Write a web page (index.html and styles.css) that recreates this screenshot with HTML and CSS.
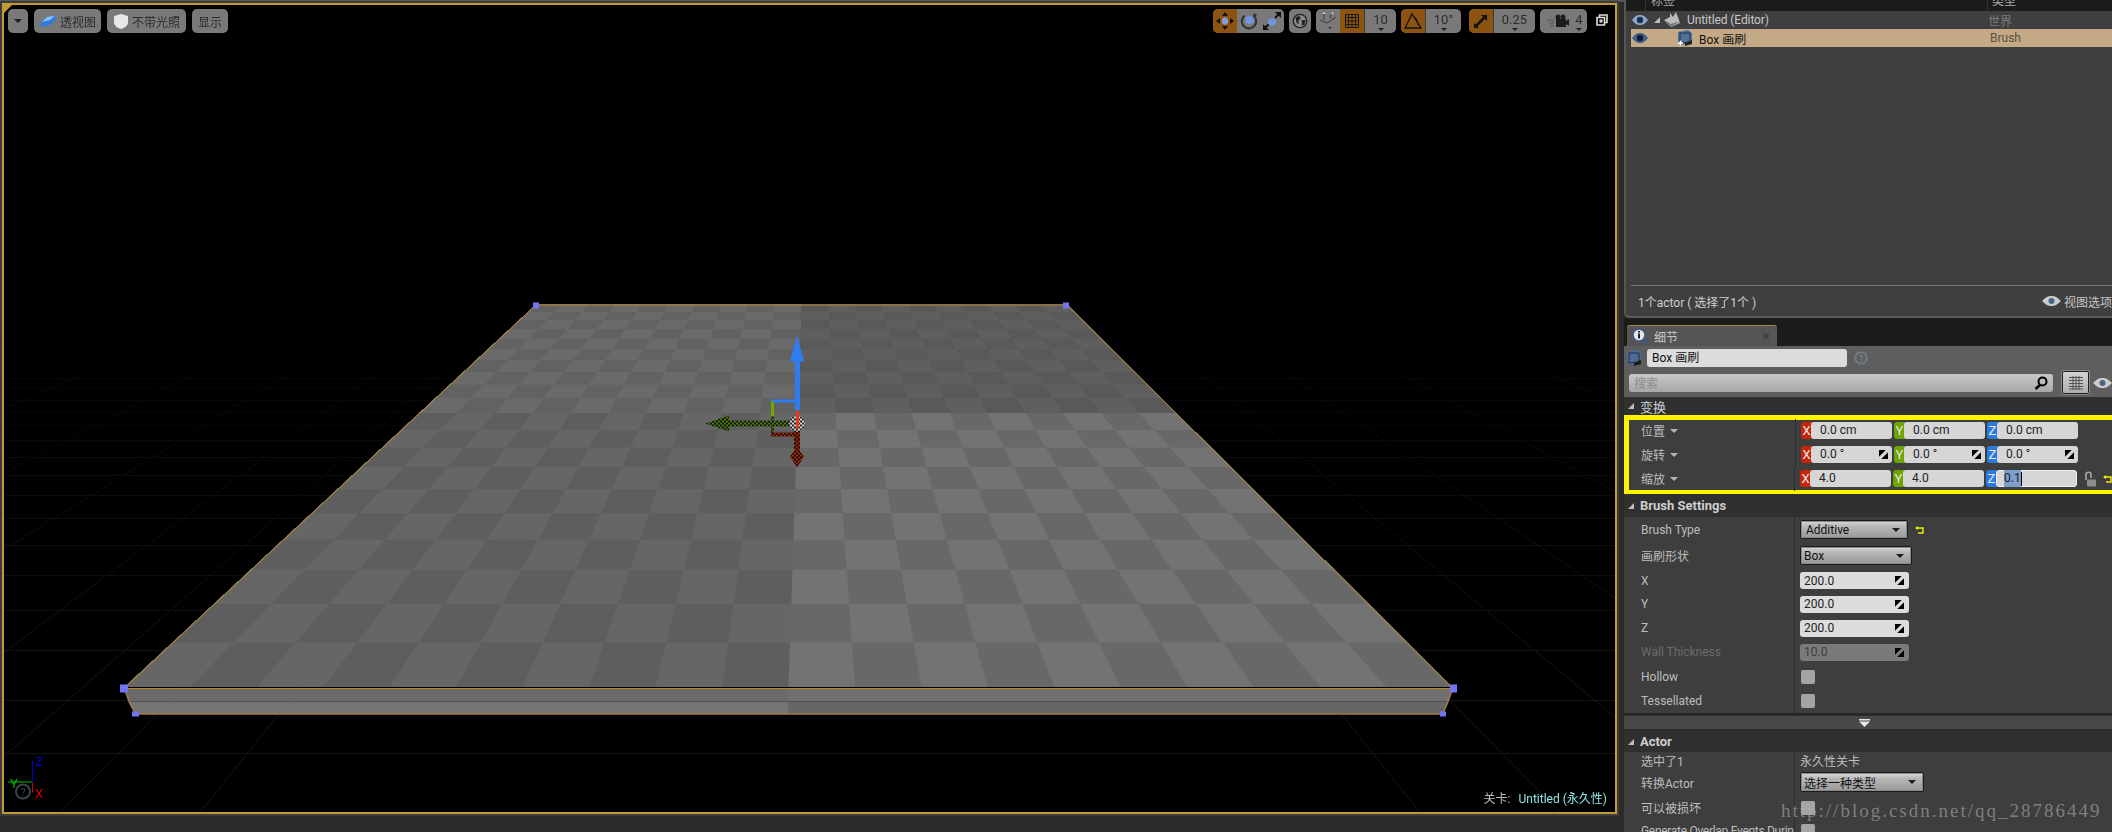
FILE: index.html
```html
<!DOCTYPE html>
<html lang="zh">
<head>
<meta charset="utf-8">
<title>Box 画刷</title>
<link rel="stylesheet" href="styles.css">
</head>
<body>
<main class="editor">
  <section class="shell">
    <div class="viewport">
      <svg class="scene" viewBox="4 5 1611 806" aria-hidden="true">
        <defs>
          <linearGradient id="gridfade" gradientUnits="userSpaceOnUse" x1="0" y1="240" x2="0" y2="680">
            <stop offset="0" stop-color="#141414" stop-opacity="0"/>
            <stop offset="1" stop-color="#141414"/>
          </linearGradient>
        </defs>
        <path class="gridlines" d="M810 49L-1300 812M810 49L-900 812M810 49L-640 812M810 49L-420 812M810 49L-210 812M810 49L-60 812M810 49L60 812M810 49L200 812M810 49L1420 812M810 49L1560 812M810 49L1730 812M810 49L1930 812M810 49L2200 812M810 49L2550 812M810 49L3000 812M810 49L3600 812M0 700H1616M0 753H1616M0 650H1616M0 610H1616M0 575H1616M0 545H1616M0 518H1616M0 495H1616M0 475H1616M0 457H1616M0 440H1616M0 425H1616M0 412H1616M0 400H1616M0 388H1616M0 378H1616"/>
      </svg>
      <div class="floor">
        <div class="quad q-tl"></div>
        <div class="quad q-tr"></div>
        <div class="quad q-bl"></div>
        <div class="quad q-br"></div>
      </div>
      <svg class="scene" viewBox="4 5 1611 806" aria-hidden="true">
        <defs>
          <pattern id="chkG" width="4" height="4" patternUnits="userSpaceOnUse">
            <rect width="4" height="4" fill="#4a7a10"/><rect width="2" height="2" fill="#111"/><rect x="2" y="2" width="2" height="2" fill="#111"/>
          </pattern>
          <pattern id="chkR" width="4" height="4" patternUnits="userSpaceOnUse">
            <rect width="4" height="4" fill="#a02c10"/><rect width="2" height="2" fill="#1a0804"/><rect x="2" y="2" width="2" height="2" fill="#1a0804"/>
          </pattern>
          <pattern id="chkW" width="4" height="4" patternUnits="userSpaceOnUse">
            <rect width="4" height="4" fill="#d8d8d8"/><rect width="2" height="2" fill="#222"/><rect x="2" y="2" width="2" height="2" fill="#222"/>
          </pattern>
        </defs>
        <path fill="#6b6b6b" d="M124 688H788V701H128Z"/>
        <path fill="#747474" d="M128 701H788V714H135Z"/>
        <path fill="#707070" d="M788 688H1453L1449 701H788Z"/>
        <path fill="#666" d="M788 701H1449L1443 714H788Z"/>
        <path class="edge" d="M536 304.5H1067L1453 688H124ZM124 688L135 713.5H1443L1453 688"/>
        <rect class="handle" x="533" y="302" width="6" height="6"/>
        <rect class="handle" x="1063" y="302" width="6" height="6"/>
        <rect class="handle" x="120" y="684" width="8" height="8"/>
        <rect class="handle" x="1450" y="684" width="7" height="8"/>
        <rect class="handle" x="132" y="711" width="7" height="5"/>
        <rect class="handle" x="1440" y="711" width="6" height="5"/>
        <!-- transform gizmo -->
        <path fill="#2d7df0" d="M797 335L804 361H790Z"/>
        <rect x="795" y="360" width="5" height="50" fill="#2d7df0"/>
        <rect x="771" y="399" width="26" height="3" fill="#2d7df0"/>
        <rect x="771" y="401" width="3" height="16" fill="#6ea800"/>
        <rect x="771" y="416" width="3" height="19" fill="url(#chkG)"/>
        <rect x="771" y="432" width="26" height="4" fill="url(#chkR)"/>
        <path fill="url(#chkG)" d="M705 423L729 415V431Z"/>
        <rect x="729" y="420" width="62" height="6" fill="url(#chkG)"/>
        <rect x="794" y="428" width="6" height="22" fill="url(#chkR)"/>
        <path fill="url(#chkR)" d="M797 447L804 456L797 467L790 456Z"/>
        <circle cx="797" cy="423" r="8" fill="url(#chkW)"/>
        <rect x="796" y="410" width="3" height="18" fill="#e83a1c"/>
        <!-- axis -->
        <path stroke="#0000d0" d="M32.5 760V781"/>
        <path stroke="#00c000" d="M8 781.5H32"/>
        <path stroke="#d00000" d="M32.5 782V792"/>
        <circle cx="23" cy="791" r="7" fill="none" stroke="#3a4450" stroke-width="2"/>
        <text x="23" y="795" class="axis-q">?</text>
        <text x="35" y="765" class="axis-z">Z</text>
        <text x="10" y="787" class="axis-y">Y</text>
        <text x="35" y="797" class="axis-x">X</text>
      </svg>

      <div class="toolbar">
        <div class="tools">
          <button class="tb tb-arrow"><span class="caret"></span></button>
          <button class="tb tb-wide">
            <svg width="18" height="14" viewBox="0 0 18 14"><path fill="#2f7be0" d="M1 10L7 3L16 1L17 5L11 11L3 13Z"/><path fill="#8fc0f5" d="M3 8L8 3L16 1.5L11 6Z"/></svg>
            透视图
          </button>
          <button class="tb tb-wide">
            <svg width="16" height="17" viewBox="0 0 16 17"><path fill="#e8e8e8" d="M8 1L15 3V9C15 13 11 15 8 16C5 15 1 13 1 9V3Z"/></svg>
            不带光照
          </button>
          <button class="tb tb-text">显示</button>
        </div>
        <div class="tools tools-right">
          <div class="group">
            <span class="seg seg-on seg-icon">
              <svg width="20" height="20" viewBox="0 0 20 20"><path fill="#111" d="M10 1L13 5H7ZM10 19L7 15H13ZM1 10L5 7V13ZM19 10L15 13V7Z"/><path fill="#7f9fe0" d="M7 8L10 6L13 8V12L10 14L7 12Z"/></svg>
            </span>
            <span class="seg seg-icon seg-r">
              <svg width="18" height="18" viewBox="0 0 20 20"><path fill="none" stroke="#333" stroke-width="2.4" d="M5 4A8 8 0 1 0 15 4"/><path fill="#333" d="M15 1V7L19 3Z"/><path fill="#6d96dd" d="M6 6L11 4L15 6V12L10 14L6 12Z"/></svg>
            </span>
            <span class="seg seg-icon seg-s">
              <svg width="20" height="20" viewBox="0 0 20 20"><path stroke="#111" stroke-width="2" d="M2 18L7 13M13 7L18 2"/><path fill="#111" d="M13 1H19V7ZM1 13V19H7Z"/><path fill="#6d96dd" d="M6 9L10 7L14 9V13L10 15L6 13Z"/></svg>
            </span>
          </div>
          <div class="group group-globe">
            <span class="seg seg-icon">
              <svg width="16" height="16" viewBox="0 0 18 18"><circle cx="9" cy="9" r="7.5" fill="#8c8c8c" stroke="#222" stroke-width="1.5"/><path fill="#222" d="M4 5L8 3L10 6L7 9L8 13L5 11ZM11 8L15 8L14 13L11 14Z"/></svg>
            </span>
          </div>
          <div class="group group-grid">
            <span class="seg seg-icon seg-snap">
              <svg width="20" height="20" viewBox="0 0 20 20"><path fill="none" stroke="#3a3a3a" d="M2 9L9 12L18 6M6 3V9M14 2L12 7"/><path fill="#ccc" d="M4 3L6 1L8 3ZM13 1L16 2L14 4Z"/><path fill="#333" d="M10 16H14L12 18Z"/></svg>
            </span>
            <span class="seg seg-on seg-icon seg-gridon">
              <svg width="14" height="14" viewBox="0 0 14 14"><path fill="none" stroke="#1a1a1a" d="M.5.5H13.5V13.5H.5ZM3.5 0V14M7 0V14M10.5 0V14M0 3.5H14M0 7H14M0 10.5H14"/></svg>
            </span>
            <span class="seg seg-val seg-10">10</span>
          </div>
          <div class="group group-angle">
            <span class="seg seg-on seg-icon">
              <svg width="18" height="18" viewBox="0 0 18 18"><path fill="none" stroke="#111" stroke-width="1.3" d="M1 16L8 2L17 16ZM10 5C13 7 14 10 14 13"/></svg>
            </span>
            <span class="seg seg-val seg-deg">10°</span>
          </div>
          <div class="group group-scale">
            <span class="seg seg-on seg-icon">
              <svg width="14" height="14" viewBox="0 0 14 14"><path stroke="#111" stroke-width="2.5" d="M2 12L12 2"/><path fill="#111" d="M7 1H13V7ZM0 9L5 14H0Z"/></svg>
            </span>
            <span class="seg seg-val seg-25">0.25</span>
          </div>
          <div class="group group-cam">
            <span class="seg seg-cam">
              <svg width="22" height="14" viewBox="0 0 22 14"><path fill="#1c1c1c" d="M9 5H19V13H9ZM19 7L22 5V12L19 10Z"/><circle cx="11" cy="3" r="2.5" fill="#1c1c1c"/><circle cx="16" cy="3" r="2.5" fill="#1c1c1c"/><path stroke="#555" d="M0 6H7M2 9H7M3 12H7"/></svg>
              <span class="seg-val seg-4">4</span>
            </span>
          </div>
          <svg class="winicon" width="12" height="12" viewBox="0 0 12 12"><path fill="none" stroke="#ddd" stroke-width="1.6" d="M3.5 3V1H11V8.5H9M1 3.5H8.5V11H1Z"/><rect x="3.5" y="5.5" width="3" height="3" fill="#ddd"/></svg>
        </div>
      </div>
      <div class="level"><span class="level-k">关卡:</span><span class="level-v">Untitled (永久性)</span></div>
    </div>
  </section>

  <aside class="side">
    <section class="outliner">
      <header class="ol-head">
        <span class="ol-eyecol"></span>
        <span class="ol-name">标签</span>
        <span class="ol-type">类型</span>
      </header>
      <div class="ol-row">
        <svg class="eye" width="16" height="10" viewBox="0 0 16 10"><path fill="#8ea6cc" d="M0 5C3 1 5 0 8 0C11 0 13 1 16 5C13 9 11 10 8 10C5 10 3 9 0 5Z"/><circle cx="8" cy="5" r="3.2" fill="#1e3050"/></svg>
        <span class="tri tri-a"></span>
        <svg class="ol-ico1" width="18" height="16" viewBox="0 0 18 16"><path fill="#bbb" d="M1 8L7 5V1L10 5L13 0L16 8L17 11L8 15Z"/><path fill="#777" d="M1 8L8 12L17 9L8 15Z"/></svg>
        <span class="ol-text">Untitled (Editor)</span>
        <span class="ol-kind">世界</span>
      </div>
      <div class="ol-row ol-sel">
        <svg class="eye" width="16" height="10" viewBox="0 0 16 10"><path fill="#41608e" d="M0 5C3 1 5 0 8 0C11 0 13 1 16 5C13 9 11 10 8 10C5 10 3 9 0 5Z"/><circle cx="8" cy="5" r="3.2" fill="#0e1c34"/></svg>
        <svg class="ol-ico2" width="16" height="16" viewBox="0 0 16 16"><path fill="#50709c" d="M1 2L11 0L15 3V12L5 15L1 12Z"/><path fill="none" stroke="#22324c" d="M3 3L13 3V12L3 13Z"/><path fill="#222" d="M8 13L15 10V14L8 16Z"/><path stroke="#fff" stroke-width="1.5" d="M1 13H6M3.5 10.5V15.5"/></svg>
        <span class="ol-text ol-text-sel">Box 画刷</span>
        <span class="ol-kind ol-kind-sel">Brush</span>
      </div>
      <div class="ol-spacer"></div>
      <footer class="ol-foot">
        <span>1个actor ( 选择了1个 )</span>
        <span class="ol-view">
          <svg width="19" height="10" viewBox="0 0 19 10"><path fill="#ccc" d="M0 5C4 1 6 0 9.5 0C13 0 15 1 19 5C15 9 13 10 9.5 10C6 10 4 9 0 5Z"/><circle cx="9.5" cy="5" r="3" fill="#4a6486"/></svg>
          视图选项
        </span>
      </footer>
    </section>

    <section class="details">
      <nav class="tabbar">
        <div class="tab">
          <svg width="17" height="17" viewBox="0 0 17 17"><circle cx="7" cy="7" r="6" fill="#e8e8e8" stroke="#3c5a8c" stroke-width="1.6"/><rect x="6" y="5.5" width="2" height="5" fill="#222"/><rect x="6" y="3" width="2" height="1.6" fill="#222"/><path stroke="#3c5a8c" stroke-width="2.4" d="M11 11L16 16"/></svg>
          <span class="tab-name">细节</span>
          <span class="tab-x">×</span>
        </div>
      </nav>
      <div class="head">
        <div class="head-name">
          <svg width="16" height="16" viewBox="0 0 16 16"><path fill="#4d6a94" d="M1 2L11 0L15 3V12L5 15L1 12Z"/><path fill="none" stroke="#1e2c44" d="M3 3L13 3V12L3 13Z"/><path fill="#1a1a1a" d="M8 13L15 10V14L8 16Z"/></svg>
          <span class="name-input">Box 画刷</span>
          <svg class="help" width="14" height="14" viewBox="0 0 14 14"><circle cx="7" cy="7" r="5.8" fill="none" stroke="#6f7c88" stroke-width="2"/><text x="7" y="10.5" class="help-q">?</text></svg>
        </div>
        <div class="head-search">
          <span class="search">
            <span class="search-text">搜索</span>
            <svg width="14" height="14" viewBox="0 0 14 14"><circle cx="8.5" cy="5.5" r="4" fill="none" stroke="#000" stroke-width="2"/><path stroke="#000" stroke-width="2.5" d="M6 9L1.5 13"/></svg>
          </span>
          <span class="gridbtn">
            <svg width="14" height="14" viewBox="0 0 14 14"><path fill="none" stroke="#555" d="M0 1.5H14M0 4.5H14M0 7.5H14M0 10.5H14M0 13H14M4 0V14M7 0V14M10 0V14"/></svg>
          </span>
          <svg class="head-eye" width="19" height="10" viewBox="0 0 19 10"><path fill="#ccc" d="M0 5C4 1 6 0 9.5 0C13 0 15 1 19 5C15 9 13 10 9.5 10C6 10 4 9 0 5Z"/><circle cx="9.5" cy="5" r="3" fill="#4a6486"/></svg>
        </div>
      </div>

      <h3 class="sect sect-tr"><span class="tri"></span>变换</h3>
      <div class="frame">
        <div class="frow">
          <span class="flabel">位置<span class="caret caret-l"></span></span>
          <span class="fvals">
            <span class="axis"><i class="tag tx">X</i><span class="val">0.0 cm</span></span>
            <span class="axis"><i class="tag ty">Y</i><span class="val">0.0 cm</span></span>
            <span class="axis"><i class="tag tz">Z</i><span class="val">0.0 cm</span></span>
          </span>
        </div>
        <div class="frow">
          <span class="flabel">旋转<span class="caret caret-l"></span></span>
          <span class="fvals">
            <span class="axis"><i class="tag tx">X</i><span class="val">0.0 °<svg class="spin" viewBox="0 0 8 8"><use href="#spin"/></svg></span></span>
            <span class="axis"><i class="tag ty">Y</i><span class="val">0.0 °<svg class="spin" viewBox="0 0 8 8"><use href="#spin"/></svg></span></span>
            <span class="axis"><i class="tag tz">Z</i><span class="val">0.0 °<svg class="spin" viewBox="0 0 8 8"><use href="#spin"/></svg></span></span>
          </span>
        </div>
        <div class="frow">
          <span class="flabel">缩放<span class="caret caret-l"></span></span>
          <span class="fvals">
            <span class="axis"><i class="tag tx">X</i><span class="val">4.0</span></span>
            <span class="axis"><i class="tag ty">Y</i><span class="val">4.0</span></span>
            <span class="axis"><i class="tag tz">Z</i><span class="val val-edit"><b class="sel-text">0.1</b><span class="cursor"></span></span></span>
            <svg class="lock" width="13" height="16" viewBox="0 0 13 16"><path fill="none" stroke="#a8a8a8" stroke-width="1.6" d="M2 9V3.5C2 .5 7 .5 7 3.5V7"/><rect x="3" y="8.5" width="9" height="7" rx="1" fill="#8d8d8d"/></svg>
            <svg class="undo undo-cut" viewBox="0 0 9 8"><use href="#undo"/></svg>
          </span>
        </div>
      </div>

      <h3 class="sect sect-bold"><span class="tri"></span>Brush Settings</h3>
      <div class="prop h25"><span class="plabel">Brush Type</span><span class="pval"><span class="combo w108">Additive<span class="caret"></span></span><svg class="undo" viewBox="0 0 9 8"><use href="#undo"/></svg></span></div>
      <div class="prop h27"><span class="plabel">画刷形状</span><span class="pval"><span class="combo combo-box w112">Box<span class="caret"></span></span></span></div>
      <div class="prop h23"><span class="plabel">X</span><span class="pval"><span class="num">200.0<svg class="spin" viewBox="0 0 8 8"><use href="#spin"/></svg></span></span></div>
      <div class="prop"><span class="plabel">Y</span><span class="pval"><span class="num">200.0<svg class="spin" viewBox="0 0 8 8"><use href="#spin"/></svg></span></span></div>
      <div class="prop"><span class="plabel">Z</span><span class="pval"><span class="num">200.0<svg class="spin" viewBox="0 0 8 8"><use href="#spin"/></svg></span></span></div>
      <div class="prop"><span class="plabel dim">Wall Thickness</span><span class="pval"><span class="num num-off">10.0<svg class="spin" viewBox="0 0 8 8"><use href="#spin"/></svg></span></span></div>
      <div class="prop h25"><span class="plabel">Hollow</span><span class="pval"><span class="check"></span></span></div>
      <div class="prop"><span class="plabel">Tessellated</span><span class="pval"><span class="check"></span></span></div>
      <div class="expander"><svg width="11" height="8" viewBox="0 0 11 8"><path fill="#e6e6e6" d="M0 0H11V1.5H0ZM0 2.5H11L5.5 8Z"/></svg></div>

      <h3 class="sect sect-bold sect-actor"><span class="tri"></span>Actor</h3>
      <div class="prop h16"><span class="plabel">选中了1</span><span class="pval pval-text">永久性关卡</span></div>
      <div class="prop h28"><span class="plabel">转换Actor</span><span class="pval"><span class="combo combo-box w124">选择一种类型<span class="caret"></span></span></span></div>
      <div class="prop h23"><span class="plabel">可以被损坏</span><span class="pval"><span class="check"></span></span></div>
      <div class="prop"><span class="plabel tight">Generate Overlap Events Durin</span><span class="pval"><span class="check"></span></span></div>
    </section>
  </aside>
</main>
<div class="watermark">http://blog.csdn.net/qq_28786449</div>
<svg class="defs" width="0" height="0" aria-hidden="true">
  <symbol id="spin" viewBox="0 0 8 8"><path fill="#000" d="M0 0H6L0 6ZM8 2V8H2Z"/></symbol>
  <symbol id="undo" viewBox="0 0 9 8"><path fill="none" stroke="#f0f000" stroke-width="1.4" d="M1 2H8V7H3"/><path fill="#f0f000" d="M3 0V4L0 2Z"/></symbol>
</svg>
</body>
</html>
```

FILE: styles.css
```css
* { box-sizing: border-box; }
html, body { margin: 0; padding: 0; height: 832px; overflow: hidden; background: #262626; }
body { font-family: Roboto, "Noto Sans CJK SC", sans-serif; font-size: 12px; color: #c6c6c6; position: relative; }
svg { display: block; flex: none; }
.defs { position: absolute; }

.editor { display: flex; height: 832px; }

/* viewport */
.shell { width: 1624px; flex: none; padding: 3px 7px 0 2px; background: linear-gradient(#565656 0 2px, #2a2a2a 2px); }
.viewport { position: relative; width: 1615px; height: 811px; border: 2px solid #c39a34; background: #000; overflow: hidden; outline: 2px solid #3c3c3c; }
.viewport::before { content: ""; position: absolute; left: 0; top: 0; border: 4px solid transparent; border-left-color: #c39a34; border-top-color: #c39a34; z-index: 2; }
.scene { position: absolute; left: 0; top: 0; width: 1611px; height: 807px; overflow: visible; fill: none; }
.gridlines { stroke: url(#gridfade); stroke-width: 1; fill: none; }
.edge { fill: none; stroke: #b8862a; stroke-width: 1; }
.handle { fill: #7474f2; }
.floor {
  position: absolute; left: 0; top: 0; width: 1000px; height: 1000px;
  display: grid; grid-template: 1fr 1fr / 1fr 1fr;
  transform-origin: 0 0;
  transform: matrix3d(.531,0,0,0, -.48406,-.02651,0,-.00060045, 0,0,1,0, 532,299,0,1);
}
.quad { background-size: 100px 100px; }
.q-tl { background-image: conic-gradient(#6a6a6a 25%, #626262 0 50%, #6a6a6a 0 75%, #626262 0); }
.q-tr { background-image: conic-gradient(#5f5f5f 25%, #595959 0 50%, #5f5f5f 0 75%, #595959 0); }
.q-bl { background-image: conic-gradient(#666 25%, #5e5e5e 0 50%, #666 0 75%, #5e5e5e 0); }
.q-br { background-image: conic-gradient(#737373 25%, #686868 0 50%, #737373 0 75%, #686868 0); }
.axis-q { font: 10px Roboto, sans-serif; fill: #3a4450; text-anchor: middle; }
.axis-z { font: 13px Roboto, sans-serif; fill: #0000d0; }
.axis-y { font: 13px Roboto, sans-serif; fill: #00c000; }
.axis-x { font: 13px Roboto, sans-serif; fill: #e00000; }
.help-q { font: 700 9px Roboto, sans-serif; fill: #6f7c88; text-anchor: middle; }

/* toolbar */
.toolbar { position: absolute; left: 4px; right: 4px; top: 4px; display: flex; justify-content: space-between; }
.tools { display: flex; gap: 6px; }
.tools-right { gap: 5px; align-items: flex-start; }
.tb { height: 24px; padding: 0; border: 0; border-radius: 5px; background: #797979; color: #2c2c2c; font: inherit; display: flex; align-items: center; justify-content: center; gap: 3px; }
.tb-arrow { width: 20px; }
.tb-wide:nth-child(2) { width: 67px; }
.tb-wide:nth-child(3) { width: 79px; }
.tb-text { width: 36px; }
.caret { display: inline-block; width: 0; height: 0; border: 4px solid transparent; border-top: 4px solid #1c1c1c; border-bottom: 0; }
.group { height: 24px; display: flex; border-radius: 5px; overflow: hidden; background: #797979; }
.seg { display: flex; align-items: center; justify-content: center; height: 24px; color: #2c2c2c; position: relative; }
.seg-on { background: #8c5410; }
.seg-icon { width: 24px; }
.seg-r { width: 23px; }
.seg-s { width: 24px; }
.group-globe .seg { width: 22px; }
.seg-gridon { width: 25px; border-right: 1px solid #3a3a3a; }
.seg-val { font-size: 13px; padding-bottom: 4px; }
.seg-val::after { content: ""; position: absolute; left: 50%; bottom: 2px; margin-left: -3px; border: 3px solid transparent; border-top: 3px solid #222; border-bottom: 0; }
.seg-10 { width: 31px; }
.seg-deg { width: 36px; border-left: 1px solid #3a3a3a; }
.seg-25 { width: 42px; border-left: 1px solid #3a3a3a; }
.seg-cam { width: 47px; gap: 6px; padding-left: 3px; }
.seg-4 { position: relative; display: flex; align-items: center; height: 24px; }
.group-scale { margin-left: 3px; }
.winicon { margin: 5px 3px 0 4px; }
.level { position: absolute; right: 8px; bottom: 5px; display: flex; gap: 8px; line-height: 16px; }
.level-k { color: #bdbdbd; }
.level-v { color: #8fe4e4; }

/* right column */
.side { width: 488px; flex: none; display: flex; flex-direction: column; }
.outliner { height: 318px; background: #3f3f3f; border-left: 2px solid #565656; border-bottom: 2px solid #5c5c5c; border-bottom-left-radius: 5px; display: flex; flex-direction: column; padding-left: 5px; }
.ol-head { height: 11px; margin-left: -5px; padding-left: 5px; background: #1b1b1b; display: flex; overflow: hidden; line-height: 0; flex: none; }
.ol-eyecol { width: 15px; border-right: 1px solid #333; }
.ol-name { width: 342px; padding-left: 5px; color: #aaa; border-right: 1px solid #333; line-height: 2px; }
.ol-type { padding-left: 4px; color: #aaa; line-height: 2px; }
.ol-row { height: 18px; display: flex; align-items: center; flex: none; }
.ol-sel { background: #c4a987; }
.eye { margin-left: 1px; }
.tri-a { margin-left: 6px; }
.tri { display: inline-block; width: 0; height: 0; border-left: 6px solid transparent; border-bottom: 6px solid #bcbcbc; flex: none; }
.ol-ico1 { margin: 0 0 0 3px; }
.ol-text { font-size: 12px; margin-left: 6px; width: 301px; color: #c8c8c8; flex: none; letter-spacing: -.1px; }
.ol-ico2 { margin-left: 29px; }
.ol-text-sel { color: #111; width: 291px; letter-spacing: 0; }
.ol-kind { color: #7c7c7c; }
.ol-kind-sel { color: #57503f; }
.ol-spacer { flex: 1; }
.ol-foot { height: 31px; border-top: 1px solid #777; display: flex; justify-content: space-between; align-items: center; padding: 0 0 0 7px; flex: none; color: #cfcfcf; }
.ol-view { display: flex; align-items: center; gap: 3px; color: #c6c6c6; white-space: nowrap; }

/* details */
.details { flex: 1; min-height: 0; }
.tabbar { height: 28px; padding: 7px 0 0 3px; background: #1c1c1c; }
.tab { width: 150px; height: 21px; background: #555; border-top: 1px solid #a08a4a; border-radius: 3px 3px 0 0; display: flex; align-items: center; padding-left: 5px; gap: 5px; }
.tab-name { color: #c8c8c8; font-size: 12px; }
.tab-x { margin-left: auto; margin-right: 7px; color: #3c3c3c; font-size: 15px; line-height: 14px; }
.head { height: 51px; background: #5e5e5e; padding: 3px 0 0 2px; }
.head-name { display: flex; align-items: center; height: 18px; }
.name-input { width: 200px; height: 18px; margin-left: 5px; padding-left: 5px; background: #dcdcdc; border-radius: 3px; color: #111; line-height: 18px; }
.help { margin-left: 7px; }
.head-search { display: flex; align-items: center; margin: 4px 0 0 3px; height: 23px; }
.search { width: 431px; height: 18px; padding: 0 5px; background: linear-gradient(#c8c8c8, #a8a8a8); border-radius: 3px; display: flex; align-items: center; justify-content: space-between; }
.search-text { color: #8b8b8b; }
.gridbtn { width: 27px; height: 23px; margin-left: 9px; background: linear-gradient(#d2d2d2, #aeaeae); border: 1px solid #222; outline: 1px solid #888; border-radius: 2px; display: flex; align-items: center; justify-content: center; }
.head-eye { margin-left: 4px; }

.sect { margin: 0; display: flex; align-items: center; background: #303030; font-size: 13px; font-weight: 400; color: #cfcfcf; padding-left: 4px; gap: 6px; }
.sect-tr { height: 18px; }
.sect-bold { height: 23px; font-weight: 700; }
.sect-actor { height: 21px; }

.frame { height: 79px; border: solid #fff200; border-width: 5px 0 4px 5px; background: #3e3e3e; padding-top: 2px; display: flex; flex-direction: column; gap: 7px; }
.frow { height: 17px; display: flex; align-items: center; }
.flabel { width: 167px; height: 24px; padding-left: 12px; display: flex; align-items: center; gap: 5px; border-right: 1px solid #2c2c2c; color: #bdbdbd; }
.caret-l { border-width: 4px; border-top: 4px solid #b4b4b4; border-left-color: transparent; border-right-color: transparent; }
.fvals { display: flex; gap: 2px; padding-left: 5px; align-items: center; }
.axis { width: 91px; height: 17px; display: flex; }
.tag { width: 11px; height: 17px; flex: none; border-radius: 3px 0 0 3px; color: #e8e8e8; font-style: normal; text-align: center; line-height: 17px; font-size: 13px; }
.tx { background: #c5260a; }
.ty { background: #6ea300; }
.tz { background: #2a7be0; }
.val { flex: 1; height: 17px; background: #d6d6d6; border-radius: 3px; color: #222; padding-left: 9px; line-height: 17px; display: flex; align-items: center; justify-content: space-between; padding-right: 4px; margin-left: -1px; }
.val-edit { justify-content: flex-start; border: 1px solid #f0f0f0; padding-left: 7px; }
.sel-text { background: #7d9fc8; font-weight: 400; }
.cursor { width: 1px; height: 14px; background: #000; }
.spin { width: 9px; height: 9px; }
.lock { margin-left: 5px; }
.undo { width: 9px; height: 8px; }
.undo-cut { margin-left: 4px; }

.prop { height: 24px; display: flex; align-items: center; background: #3e3e3e; }
.h16 { height: 16px; }
.h23 { height: 23px; }
.h25 { height: 25px; }
.h27 { height: 27px; }
.h28 { height: 28px; }
.plabel { width: 171px; height: 100%; padding-left: 17px; display: flex; align-items: center; border-right: 1px solid #2c2c2c; color: #bdbdbd; white-space: nowrap; overflow: hidden; flex: none; }
.tight { letter-spacing: -.3px; }
.dim { color: #6c6c6c; }
.pval { padding-left: 5px; display: flex; align-items: center; gap: 7px; }
.pval-text { color: #bdbdbd; }
.combo { height: 19px; padding: 0 5px; background: linear-gradient(#dadada, #b8b8b8 30%, #989898); border: 1px solid #1a1a1a; outline: 1px solid #888; outline-offset: -2px; border-radius: 2px; color: #111; display: flex; align-items: center; justify-content: space-between; }
.combo-box { padding-left: 3px; }
.combo .caret { margin-right: 2px; }
.w108 { width: 108px; }
.w112 { width: 112px; }
.w124 { width: 124px; height: 20px; }
.num { width: 109px; height: 17px; padding: 0 5px 0 4px; background: #dcdcdc; border-radius: 3px; color: #222; display: flex; align-items: center; justify-content: space-between; }
.num-off { background: #7a7a7a; color: #3d3d3d; }
.check { display: block; width: 14px; height: 14px; margin-left: 1px; border-radius: 2px; background: #a4a4a4; }
.expander { height: 16px; margin-top: 2px; background: #484848; border-top: 1px solid #2c2c2c; border-bottom: 2px solid #2c2c2c; display: flex; align-items: center; justify-content: center; padding-right: 2px; }
.expander svg { margin-left: -5px; }

.watermark { position: absolute; left: 1781px; top: 800px; font: 19px "Liberation Serif", serif; letter-spacing: 2px; color: rgba(170, 170, 170, .62); white-space: nowrap; }
```
